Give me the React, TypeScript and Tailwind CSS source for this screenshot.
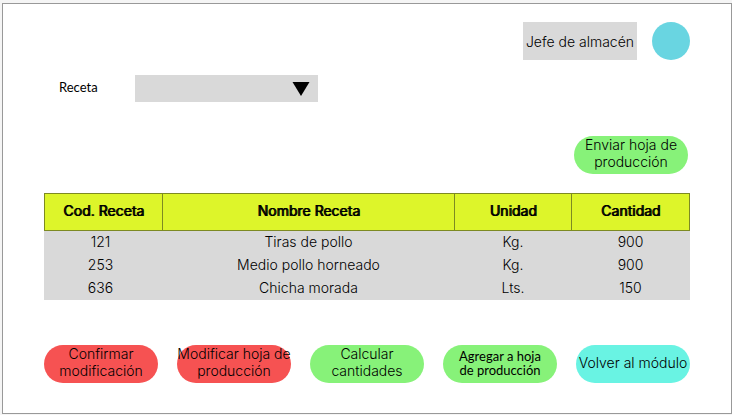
import type { ReactNode } from "react";

const recipes = [
  { code: "121", name: "Tiras de pollo", unit: "Kg.", amount: "900" },
  { code: "253", name: "Medio pollo horneado", unit: "Kg.", amount: "900" },
  { code: "636", name: "Chicha morada", unit: "Lts.", amount: "150" },
];

function Pill({ color, small = false, children }: { color: string; small?: boolean; children: ReactNode }) {
  const text = small
    ? "pb-0.5 font-[Lato,sans-serif] text-[13px] leading-[14px] font-normal"
    : "pb-1 text-sm leading-[17px] font-light";
  return (
    <button
      type="button"
      className={`flex h-[38px] w-[114px] shrink-0 items-center justify-center rounded-full text-center whitespace-nowrap ${text} ${color}`}
    >
      <span>{children}</span>
    </button>
  );
}

export default function App() {
  return (
    <div className="min-h-screen bg-[#f5f5f5] pt-[3px] pb-px pl-0.5 font-[Inter,sans-serif] font-light text-black">
      <main className="flex min-h-[411px] flex-col border border-[#999999] bg-white pt-[18px] pr-[41px] pb-[30px] pl-[41px]">
        <header className="flex items-center justify-end gap-[15px]">
          <div className="flex h-[38px] w-[114px] items-center justify-center bg-[#d9d9d9] text-sm leading-[17px] whitespace-nowrap">
            Jefe de almacén
          </div>
          <div className="size-[38px] rounded-full bg-[#69d5e1]" />
        </header>

        <div className="mt-[15px] flex items-center pl-[15px]">
          <label htmlFor="receta" className="w-[76px] pb-1 font-[Lato,sans-serif] text-[13px] leading-4 font-normal">
            Receta
          </label>
          <div className="relative">
            <select id="receta" className="block h-[27px] w-[183px] appearance-none bg-[#d9d9d9] px-2 text-sm">
              <option value=""></option>
              {recipes.map((r) => (
                <option key={r.code} value={r.code}>
                  {r.name}
                </option>
              ))}
            </select>
            <svg
              className="pointer-events-none absolute top-[7px] right-2 h-[14px] w-[18px]"
              viewBox="0 0 18 14"
              aria-hidden="true"
            >
              <path d="M0.5 0H17.5L9 14Z" fill="#000" />
            </svg>
          </div>
        </div>

        <div className="mt-[34px] flex justify-end pr-0.5">
          <Pill color="bg-[#87f279]">
            Enviar hoja de
            <br />
            producción
          </Pill>
        </div>

        <table className="mt-[19px] w-full table-fixed border-collapse bg-[#d9d9d9] text-center text-sm leading-[17px]">
          <colgroup>
            <col className="w-[118px]" />
            <col />
            <col className="w-[117px]" />
            <col className="w-[118px]" />
          </colgroup>
          <thead>
            <tr className="h-[37px] bg-[#ddf52a]">
              {["Cod. Receta", "Nombre Receta", "Unidad", "Cantidad"].map((h) => (
                <th key={h} className="border border-[#7d8a22] p-0 pb-1 font-normal [text-shadow:1px_0_0_#000]">
                  {h}
                </th>
              ))}
            </tr>
          </thead>
          <tbody>
            {recipes.map((r) => (
              <tr key={r.code} className="h-[23px]">
                <td className="p-0 pr-1.5 pb-0.5">{r.code}</td>
                <td className="p-0 pb-0.5">{r.name}</td>
                <td className="p-0 pb-0.5">{r.unit}</td>
                <td className="p-0 pb-0.5">{r.amount}</td>
              </tr>
            ))}
          </tbody>
        </table>

        <footer className="mt-auto flex justify-between">
          <Pill color="bg-[#f65252]">
            Confirmar
            <br />
            modificación
          </Pill>
          <Pill color="bg-[#f65252]">
            Modificar hoja de
            <br />
            producción
          </Pill>
          <Pill color="bg-[#87f279]">
            Calcular
            <br />
            cantidades
          </Pill>
          <Pill color="bg-[#87f279]" small>
            Agregar a hoja
            <br />
            de producción
          </Pill>
          <Pill color="bg-[#69f3e3]">Volver al módulo</Pill>
        </footer>
      </main>
    </div>
  );
}
